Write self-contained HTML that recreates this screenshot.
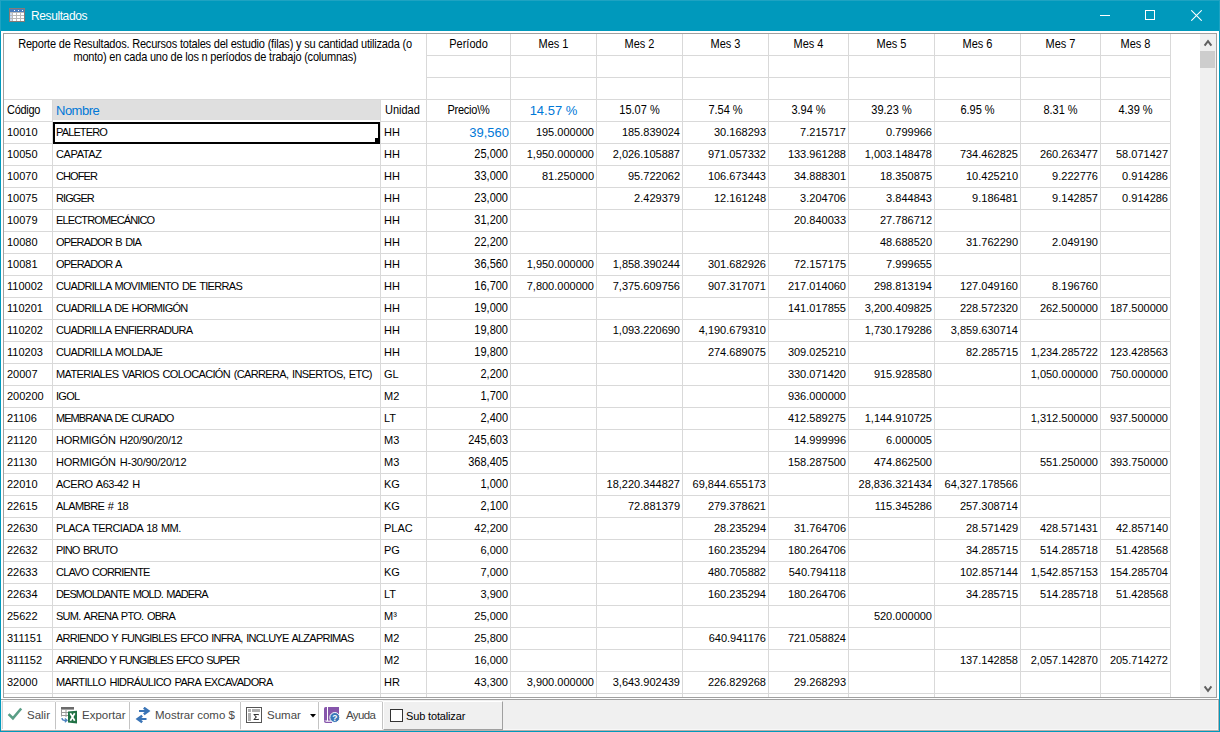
<!DOCTYPE html>
<html><head><meta charset="utf-8">
<style>
html,body{margin:0;padding:0;}
body{width:1220px;height:732px;overflow:hidden;position:relative;background:#0099bc;font-family:"Liberation Sans",sans-serif;}
div,span,svg{position:absolute;box-sizing:content-box;}
.t{font-size:11px;line-height:13px;color:#000;white-space:nowrap;}
.r{width:300px;text-align:right;}
.c{text-align:center;}
.blue{color:#0078d7;}
.b{font-size:13px;}
.nm{letter-spacing:-0.72px;word-spacing:1.2px;}
.ms{transform:scaleY(1.125);transform-origin:0 10.3px;}
.hdr{line-height:13px;}
.tb{font-size:11.5px;line-height:14px;color:#474747;white-space:nowrap;}
</style></head><body>
<!-- title bar -->
<div style="left:0;top:0;width:1220px;height:1px;background:#1ea3c2"></div><div style="left:0;top:0;width:1px;height:31px;background:#1ea3c2"></div><div style="left:1219px;top:0;width:1px;height:31px;background:#1ea3c2"></div>
<svg style="left:9px;top:8px" width="16" height="14" viewBox="0 0 16 14">
<rect x="0.5" y="0.5" width="15" height="13" fill="#b9b9b9" stroke="#857a76"/>
<rect x="1" y="1" width="14" height="3" fill="#4a7cbd"/>
<rect x="5" y="2" width="1" height="1" fill="#fff"/><rect x="9" y="2" width="1" height="1" fill="#fff"/><rect x="13" y="2" width="1" height="1" fill="#fff"/>
<rect x="1" y="5" width="2" height="2" fill="#c8daf0"/><rect x="4" y="5" width="3" height="2" fill="#fff"/><rect x="8" y="5" width="3" height="2" fill="#fff"/><rect x="12" y="5" width="3" height="2" fill="#fff"/>
<rect x="1" y="8" width="2" height="2" fill="#c8daf0"/><rect x="4" y="8" width="3" height="2" fill="#fff"/><rect x="8" y="8" width="3" height="2" fill="#fff"/><rect x="12" y="8" width="3" height="2" fill="#fff"/>
<rect x="1" y="11" width="2" height="2" fill="#c8daf0"/><rect x="4" y="11" width="3" height="2" fill="#fff"/><rect x="8" y="11" width="3" height="2" fill="#fff"/><rect x="12" y="11" width="3" height="2" fill="#fff"/>
</svg>
<span style="left:31px;top:9px;font-size:12px;line-height:14px;color:#fff;white-space:nowrap;letter-spacing:-0.4px">Resultados</span>
<div style="left:1100px;top:15px;width:10px;height:1px;background:#fff"></div>
<div style="left:1145px;top:10px;width:8px;height:8px;border:1px solid #fff"></div>
<svg style="left:1191px;top:10px" width="11" height="11" viewBox="0 0 11 11"><path d="M0.3 0.3 L10.7 10.7 M10.7 0.3 L0.3 10.7" stroke="#fff" stroke-width="1.05"/></svg>
<div style="left:1px;top:31px;width:1218px;height:700px;background:#ffffff;"></div>
<div style="left:3px;top:33px;width:1214px;height:665px;background:#a0a0a0;"></div>
<div style="left:4px;top:34px;width:1212px;height:663px;background:#ffffff;"></div>
<div style="left:426px;top:55px;width:745px;height:1px;background:#d9d9d9;"></div>
<div style="left:426px;top:77px;width:745px;height:1px;background:#d9d9d9;"></div>
<div style="left:4px;top:99px;width:1167px;height:1px;background:#d9d9d9;"></div>
<div style="left:4px;top:121px;width:1167px;height:1px;background:#d9d9d9;"></div>
<div style="left:4px;top:143px;width:1167px;height:1px;background:#d9d9d9;"></div>
<div style="left:4px;top:165px;width:1167px;height:1px;background:#d9d9d9;"></div>
<div style="left:4px;top:187px;width:1167px;height:1px;background:#d9d9d9;"></div>
<div style="left:4px;top:209px;width:1167px;height:1px;background:#d9d9d9;"></div>
<div style="left:4px;top:231px;width:1167px;height:1px;background:#d9d9d9;"></div>
<div style="left:4px;top:253px;width:1167px;height:1px;background:#d9d9d9;"></div>
<div style="left:4px;top:275px;width:1167px;height:1px;background:#d9d9d9;"></div>
<div style="left:4px;top:297px;width:1167px;height:1px;background:#d9d9d9;"></div>
<div style="left:4px;top:319px;width:1167px;height:1px;background:#d9d9d9;"></div>
<div style="left:4px;top:341px;width:1167px;height:1px;background:#d9d9d9;"></div>
<div style="left:4px;top:363px;width:1167px;height:1px;background:#d9d9d9;"></div>
<div style="left:4px;top:385px;width:1167px;height:1px;background:#d9d9d9;"></div>
<div style="left:4px;top:407px;width:1167px;height:1px;background:#d9d9d9;"></div>
<div style="left:4px;top:429px;width:1167px;height:1px;background:#d9d9d9;"></div>
<div style="left:4px;top:451px;width:1167px;height:1px;background:#d9d9d9;"></div>
<div style="left:4px;top:473px;width:1167px;height:1px;background:#d9d9d9;"></div>
<div style="left:4px;top:495px;width:1167px;height:1px;background:#d9d9d9;"></div>
<div style="left:4px;top:517px;width:1167px;height:1px;background:#d9d9d9;"></div>
<div style="left:4px;top:539px;width:1167px;height:1px;background:#d9d9d9;"></div>
<div style="left:4px;top:561px;width:1167px;height:1px;background:#d9d9d9;"></div>
<div style="left:4px;top:583px;width:1167px;height:1px;background:#d9d9d9;"></div>
<div style="left:4px;top:605px;width:1167px;height:1px;background:#d9d9d9;"></div>
<div style="left:4px;top:627px;width:1167px;height:1px;background:#d9d9d9;"></div>
<div style="left:4px;top:649px;width:1167px;height:1px;background:#d9d9d9;"></div>
<div style="left:4px;top:671px;width:1167px;height:1px;background:#d9d9d9;"></div>
<div style="left:4px;top:693px;width:1167px;height:1px;background:#d9d9d9;"></div>
<div style="left:52px;top:99px;width:1px;height:598px;background:#d9d9d9;"></div>
<div style="left:380px;top:99px;width:1px;height:598px;background:#d9d9d9;"></div>
<div style="left:426px;top:34px;width:1px;height:663px;background:#d9d9d9;"></div>
<div style="left:510px;top:34px;width:1px;height:663px;background:#d9d9d9;"></div>
<div style="left:596px;top:34px;width:1px;height:663px;background:#d9d9d9;"></div>
<div style="left:682px;top:34px;width:1px;height:663px;background:#d9d9d9;"></div>
<div style="left:768px;top:34px;width:1px;height:663px;background:#d9d9d9;"></div>
<div style="left:848px;top:34px;width:1px;height:663px;background:#d9d9d9;"></div>
<div style="left:934px;top:34px;width:1px;height:663px;background:#d9d9d9;"></div>
<div style="left:1020px;top:34px;width:1px;height:663px;background:#d9d9d9;"></div>
<div style="left:1100px;top:34px;width:1px;height:663px;background:#d9d9d9;"></div>
<div style="left:1170px;top:34px;width:1px;height:663px;background:#d9d9d9;"></div>
<div style="left:53px;top:100px;width:327px;height:20px;background:#dfdfdf;"></div>
<div style="left:53px;top:120px;width:327px;height:2px;background:#ffffff;"></div>
<div style="left:1200px;top:34px;width:16px;height:663px;background:#f0f0f0;"></div>
<div style="left:1200px;top:51px;width:15px;height:17px;background:#cdcdcd;"></div>
<svg style="position:absolute;left:1200px;top:34px" width="16" height="16"><path d="M4.6 11.6 L8 7.2 L11.4 11.6" fill="none" stroke="#606060" stroke-width="2"/></svg>
<svg style="position:absolute;left:1200px;top:680px" width="16" height="16"><path d="M4.6 6.4 L8 10.8 L11.4 6.4" fill="none" stroke="#606060" stroke-width="2"/></svg>
<div class="t c ms" style="left:4px;width:422px;top:38px;letter-spacing:-0.2px;">Reporte de Resultados. Recursos totales del estudio (filas) y su cantidad utilizada (o</div>
<div class="t c ms" style="left:4px;width:422px;top:51px;letter-spacing:-0.2px;">monto) en cada uno de los n per&iacute;odos de trabajo (columnas)</div>
<span class="t ms c" style="left:427px;width:83px;top:38px;">Per&iacute;odo</span>
<span class="t ms c" style="left:511px;width:85px;top:38px;">Mes 1</span>
<span class="t ms c" style="left:597px;width:85px;top:38px;">Mes 2</span>
<span class="t ms c" style="left:683px;width:85px;top:38px;">Mes 3</span>
<span class="t ms c" style="left:769px;width:79px;top:38px;">Mes 4</span>
<span class="t ms c" style="left:849px;width:85px;top:38px;">Mes 5</span>
<span class="t ms c" style="left:935px;width:85px;top:38px;">Mes 6</span>
<span class="t ms c" style="left:1021px;width:79px;top:38px;">Mes 7</span>
<span class="t ms c" style="left:1101px;width:69px;top:38px;">Mes 8</span>
<span class="t ms" style="left:7px;top:104px;letter-spacing:-0.3px">C&oacute;digo</span>
<span class="t blue b" style="left:56px;top:104px;letter-spacing:-0.5px">Nombre</span>
<span class="t ms" style="left:385px;top:104px;">Unidad</span>
<span class="t ms c" style="left:427px;width:83px;top:104px;letter-spacing:-0.25px">Precio\%</span>
<span class="t blue b c" style="left:511px;width:85px;top:104px;">14.57 %</span>
<span class="t ms c" style="left:597px;width:85px;top:104px;">15.07 %</span>
<span class="t ms c" style="left:683px;width:85px;top:104px;">7.54 %</span>
<span class="t ms c" style="left:769px;width:79px;top:104px;">3.94 %</span>
<span class="t ms c" style="left:849px;width:85px;top:104px;">39.23 %</span>
<span class="t ms c" style="left:935px;width:85px;top:104px;">6.95 %</span>
<span class="t ms c" style="left:1021px;width:79px;top:104px;">8.31 %</span>
<span class="t ms c" style="left:1101px;width:69px;top:104px;">4.39 %</span>
<span class="t" style="left:7px;top:126px;">10010</span>
<span class="t nm" style="left:56px;top:126px;letter-spacing:-0.863px">PALETERO</span>
<span class="t" style="left:384px;top:126px;">HH</span>
<span class="t blue b r" style="left:209px;top:126px;">39,560</span>
<span class="t r" style="left:294px;top:126px;">195.000000</span>
<span class="t r" style="left:380px;top:126px;">185.839024</span>
<span class="t r" style="left:466px;top:126px;">30.168293</span>
<span class="t r" style="left:546px;top:126px;">7.215717</span>
<span class="t r" style="left:632px;top:126px;">0.799966</span>
<span class="t" style="left:7px;top:148px;">10050</span>
<span class="t nm" style="left:56px;top:148px;letter-spacing:-0.387px">CAPATAZ</span>
<span class="t" style="left:384px;top:148px;">HH</span>
<span class="t ms r" style="left:208px;top:148px;">25,000</span>
<span class="t r" style="left:294px;top:148px;">1,950.000000</span>
<span class="t r" style="left:380px;top:148px;">2,026.105887</span>
<span class="t r" style="left:466px;top:148px;">971.057332</span>
<span class="t r" style="left:546px;top:148px;">133.961288</span>
<span class="t r" style="left:632px;top:148px;">1,003.148478</span>
<span class="t r" style="left:718px;top:148px;">734.462825</span>
<span class="t r" style="left:798px;top:148px;">260.263477</span>
<span class="t r" style="left:868px;top:148px;">58.071427</span>
<span class="t" style="left:7px;top:170px;">10070</span>
<span class="t nm" style="left:56px;top:170px;letter-spacing:-0.920px">CHOFER</span>
<span class="t" style="left:384px;top:170px;">HH</span>
<span class="t ms r" style="left:208px;top:170px;">33,000</span>
<span class="t r" style="left:294px;top:170px;">81.250000</span>
<span class="t r" style="left:380px;top:170px;">95.722062</span>
<span class="t r" style="left:466px;top:170px;">106.673443</span>
<span class="t r" style="left:546px;top:170px;">34.888301</span>
<span class="t r" style="left:632px;top:170px;">18.350875</span>
<span class="t r" style="left:718px;top:170px;">10.425210</span>
<span class="t r" style="left:798px;top:170px;">9.222776</span>
<span class="t r" style="left:868px;top:170px;">0.914286</span>
<span class="t" style="left:7px;top:192px;">10075</span>
<span class="t nm" style="left:56px;top:192px;letter-spacing:-0.920px">RIGGER</span>
<span class="t" style="left:384px;top:192px;">HH</span>
<span class="t ms r" style="left:208px;top:192px;">23,000</span>
<span class="t r" style="left:380px;top:192px;">2.429379</span>
<span class="t r" style="left:466px;top:192px;">12.161248</span>
<span class="t r" style="left:546px;top:192px;">3.204706</span>
<span class="t r" style="left:632px;top:192px;">3.844843</span>
<span class="t r" style="left:718px;top:192px;">9.186481</span>
<span class="t r" style="left:798px;top:192px;">9.142857</span>
<span class="t r" style="left:868px;top:192px;">0.914286</span>
<span class="t" style="left:7px;top:214px;">10079</span>
<span class="t nm" style="left:56px;top:214px;letter-spacing:-0.863px">ELECTROMEC&Aacute;NICO</span>
<span class="t" style="left:384px;top:214px;">HH</span>
<span class="t ms r" style="left:208px;top:214px;">31,200</span>
<span class="t r" style="left:546px;top:214px;">20.840033</span>
<span class="t r" style="left:632px;top:214px;">27.786712</span>
<span class="t" style="left:7px;top:236px;">10080</span>
<span class="t nm" style="left:56px;top:236px;letter-spacing:-0.874px">OPERADOR B DIA</span>
<span class="t" style="left:384px;top:236px;">HH</span>
<span class="t ms r" style="left:208px;top:236px;">22,200</span>
<span class="t r" style="left:632px;top:236px;">48.688520</span>
<span class="t r" style="left:718px;top:236px;">31.762290</span>
<span class="t r" style="left:798px;top:236px;">2.049190</span>
<span class="t" style="left:7px;top:258px;">10081</span>
<span class="t nm" style="left:56px;top:258px;letter-spacing:-0.831px">OPERADOR A</span>
<span class="t" style="left:384px;top:258px;">HH</span>
<span class="t ms r" style="left:208px;top:258px;">36,560</span>
<span class="t r" style="left:294px;top:258px;">1,950.000000</span>
<span class="t r" style="left:380px;top:258px;">1,858.390244</span>
<span class="t r" style="left:466px;top:258px;">301.682926</span>
<span class="t r" style="left:546px;top:258px;">72.157175</span>
<span class="t r" style="left:632px;top:258px;">7.999655</span>
<span class="t" style="left:7px;top:280px;">110002</span>
<span class="t nm" style="left:56px;top:280px;letter-spacing:-0.687px">CUADRILLA MOVIMIENTO DE TIERRAS</span>
<span class="t" style="left:384px;top:280px;">HH</span>
<span class="t ms r" style="left:208px;top:280px;">16,700</span>
<span class="t r" style="left:294px;top:280px;">7,800.000000</span>
<span class="t r" style="left:380px;top:280px;">7,375.609756</span>
<span class="t r" style="left:466px;top:280px;">907.317071</span>
<span class="t r" style="left:546px;top:280px;">217.014060</span>
<span class="t r" style="left:632px;top:280px;">298.813194</span>
<span class="t r" style="left:718px;top:280px;">127.049160</span>
<span class="t r" style="left:798px;top:280px;">8.196760</span>
<span class="t" style="left:7px;top:302px;">110201</span>
<span class="t nm" style="left:56px;top:302px;letter-spacing:-0.720px">CUADRILLA DE HORMIG&Oacute;N</span>
<span class="t" style="left:384px;top:302px;">HH</span>
<span class="t ms r" style="left:208px;top:302px;">19,000</span>
<span class="t r" style="left:546px;top:302px;">141.017855</span>
<span class="t r" style="left:632px;top:302px;">3,200.409825</span>
<span class="t r" style="left:718px;top:302px;">228.572320</span>
<span class="t r" style="left:798px;top:302px;">262.500000</span>
<span class="t r" style="left:868px;top:302px;">187.500000</span>
<span class="t" style="left:7px;top:324px;">110202</span>
<span class="t nm" style="left:56px;top:324px;letter-spacing:-0.720px">CUADRILLA ENFIERRADURA</span>
<span class="t" style="left:384px;top:324px;">HH</span>
<span class="t ms r" style="left:208px;top:324px;">19,800</span>
<span class="t r" style="left:380px;top:324px;">1,093.220690</span>
<span class="t r" style="left:466px;top:324px;">4,190.679310</span>
<span class="t r" style="left:632px;top:324px;">1,730.179286</span>
<span class="t r" style="left:718px;top:324px;">3,859.630714</span>
<span class="t" style="left:7px;top:346px;">110203</span>
<span class="t nm" style="left:56px;top:346px;letter-spacing:-0.657px">CUADRILLA MOLDAJE</span>
<span class="t" style="left:384px;top:346px;">HH</span>
<span class="t ms r" style="left:208px;top:346px;">19,800</span>
<span class="t r" style="left:466px;top:346px;">274.689075</span>
<span class="t r" style="left:546px;top:346px;">309.025210</span>
<span class="t r" style="left:718px;top:346px;">82.285715</span>
<span class="t r" style="left:798px;top:346px;">1,234.285722</span>
<span class="t r" style="left:868px;top:346px;">123.428563</span>
<span class="t" style="left:7px;top:368px;">20007</span>
<span class="t nm" style="left:56px;top:368px;letter-spacing:-0.643px">MATERIALES VARIOS COLOCACI&Oacute;N (CARRERA, INSERTOS, ETC)</span>
<span class="t" style="left:384px;top:368px;">GL</span>
<span class="t ms r" style="left:208px;top:368px;">2,200</span>
<span class="t r" style="left:546px;top:368px;">330.071420</span>
<span class="t r" style="left:632px;top:368px;">915.928580</span>
<span class="t r" style="left:798px;top:368px;">1,050.000000</span>
<span class="t r" style="left:868px;top:368px;">750.000000</span>
<span class="t" style="left:7px;top:390px;">200200</span>
<span class="t nm" style="left:56px;top:390px;letter-spacing:-0.720px">IGOL</span>
<span class="t" style="left:384px;top:390px;">M2</span>
<span class="t ms r" style="left:208px;top:390px;">1,700</span>
<span class="t r" style="left:546px;top:390px;">936.000000</span>
<span class="t" style="left:7px;top:412px;">21106</span>
<span class="t nm" style="left:56px;top:412px;letter-spacing:-0.955px">MEMBRANA DE CURADO</span>
<span class="t" style="left:384px;top:412px;">LT</span>
<span class="t ms r" style="left:208px;top:412px;">2,400</span>
<span class="t r" style="left:546px;top:412px;">412.589275</span>
<span class="t r" style="left:632px;top:412px;">1,144.910725</span>
<span class="t r" style="left:798px;top:412px;">1,312.500000</span>
<span class="t r" style="left:868px;top:412px;">937.500000</span>
<span class="t" style="left:7px;top:434px;">21120</span>
<span class="t nm" style="left:56px;top:434px;letter-spacing:-0.270px">HORMIG&Oacute;N H20/90/20/12</span>
<span class="t" style="left:384px;top:434px;">M3</span>
<span class="t ms r" style="left:208px;top:434px;">245,603</span>
<span class="t r" style="left:546px;top:434px;">14.999996</span>
<span class="t r" style="left:632px;top:434px;">6.000005</span>
<span class="t" style="left:7px;top:456px;">21130</span>
<span class="t nm" style="left:56px;top:456px;letter-spacing:-0.244px">HORMIG&Oacute;N H-30/90/20/12</span>
<span class="t" style="left:384px;top:456px;">M3</span>
<span class="t ms r" style="left:208px;top:456px;">368,405</span>
<span class="t r" style="left:546px;top:456px;">158.287500</span>
<span class="t r" style="left:632px;top:456px;">474.862500</span>
<span class="t r" style="left:798px;top:456px;">551.250000</span>
<span class="t r" style="left:868px;top:456px;">393.750000</span>
<span class="t" style="left:7px;top:478px;">22010</span>
<span class="t nm" style="left:56px;top:478px;letter-spacing:-0.489px">ACERO A63-42 H</span>
<span class="t" style="left:384px;top:478px;">KG</span>
<span class="t ms r" style="left:208px;top:478px;">1,000</span>
<span class="t r" style="left:380px;top:478px;">18,220.344827</span>
<span class="t r" style="left:466px;top:478px;">69,844.655173</span>
<span class="t r" style="left:632px;top:478px;">28,836.321434</span>
<span class="t r" style="left:718px;top:478px;">64,327.178566</span>
<span class="t" style="left:7px;top:500px;">22615</span>
<span class="t nm" style="left:56px;top:500px;letter-spacing:-0.629px">ALAMBRE # 18</span>
<span class="t" style="left:384px;top:500px;">KG</span>
<span class="t ms r" style="left:208px;top:500px;">2,100</span>
<span class="t r" style="left:380px;top:500px;">72.881379</span>
<span class="t r" style="left:466px;top:500px;">279.378621</span>
<span class="t r" style="left:632px;top:500px;">115.345286</span>
<span class="t r" style="left:718px;top:500px;">257.308714</span>
<span class="t" style="left:7px;top:522px;">22630</span>
<span class="t nm" style="left:56px;top:522px;letter-spacing:-0.570px">PLACA TERCIADA 18 MM.</span>
<span class="t" style="left:384px;top:522px;">PLAC</span>
<span class="t r" style="left:208px;top:522px;">42,200</span>
<span class="t r" style="left:466px;top:522px;">28.235294</span>
<span class="t r" style="left:546px;top:522px;">31.764706</span>
<span class="t r" style="left:718px;top:522px;">28.571429</span>
<span class="t r" style="left:798px;top:522px;">428.571431</span>
<span class="t r" style="left:868px;top:522px;">42.857140</span>
<span class="t" style="left:7px;top:544px;">22632</span>
<span class="t nm" style="left:56px;top:544px;letter-spacing:-0.831px">PINO BRUTO</span>
<span class="t" style="left:384px;top:544px;">PG</span>
<span class="t r" style="left:208px;top:544px;">6,000</span>
<span class="t r" style="left:466px;top:544px;">160.235294</span>
<span class="t r" style="left:546px;top:544px;">180.264706</span>
<span class="t r" style="left:718px;top:544px;">34.285715</span>
<span class="t r" style="left:798px;top:544px;">514.285718</span>
<span class="t r" style="left:868px;top:544px;">51.428568</span>
<span class="t" style="left:7px;top:566px;">22633</span>
<span class="t nm" style="left:56px;top:566px;letter-spacing:-0.791px">CLAVO CORRIENTE</span>
<span class="t" style="left:384px;top:566px;">KG</span>
<span class="t r" style="left:208px;top:566px;">7,000</span>
<span class="t r" style="left:466px;top:566px;">480.705882</span>
<span class="t r" style="left:546px;top:566px;">540.794118</span>
<span class="t r" style="left:718px;top:566px;">102.857144</span>
<span class="t r" style="left:798px;top:566px;">1,542.857153</span>
<span class="t r" style="left:868px;top:566px;">154.285704</span>
<span class="t" style="left:7px;top:588px;">22634</span>
<span class="t nm" style="left:56px;top:588px;letter-spacing:-0.937px">DESMOLDANTE MOLD. MADERA</span>
<span class="t" style="left:384px;top:588px;">LT</span>
<span class="t r" style="left:208px;top:588px;">3,900</span>
<span class="t r" style="left:466px;top:588px;">160.235294</span>
<span class="t r" style="left:546px;top:588px;">180.264706</span>
<span class="t r" style="left:718px;top:588px;">34.285715</span>
<span class="t r" style="left:798px;top:588px;">514.285718</span>
<span class="t r" style="left:868px;top:588px;">51.428568</span>
<span class="t" style="left:7px;top:610px;">25622</span>
<span class="t nm" style="left:56px;top:610px;letter-spacing:-0.720px">SUM. ARENA PTO. OBRA</span>
<span class="t" style="left:384px;top:610px;">M&sup3;</span>
<span class="t r" style="left:208px;top:610px;">25,000</span>
<span class="t r" style="left:632px;top:610px;">520.000000</span>
<span class="t" style="left:7px;top:632px;">311151</span>
<span class="t nm" style="left:56px;top:632px;letter-spacing:-0.760px">ARRIENDO Y FUNGIBLES EFCO INFRA, INCLUYE ALZAPRIMAS</span>
<span class="t" style="left:384px;top:632px;">M2</span>
<span class="t r" style="left:208px;top:632px;">25,800</span>
<span class="t r" style="left:466px;top:632px;">640.941176</span>
<span class="t r" style="left:546px;top:632px;">721.058824</span>
<span class="t" style="left:7px;top:654px;">311152</span>
<span class="t nm" style="left:56px;top:654px;letter-spacing:-0.953px">ARRIENDO Y FUNGIBLES EFCO SUPER</span>
<span class="t" style="left:384px;top:654px;">M2</span>
<span class="t r" style="left:208px;top:654px;">16,000</span>
<span class="t r" style="left:718px;top:654px;">137.142858</span>
<span class="t r" style="left:798px;top:654px;">2,057.142870</span>
<span class="t r" style="left:868px;top:654px;">205.714272</span>
<span class="t" style="left:7px;top:676px;">32000</span>
<span class="t nm" style="left:56px;top:676px;letter-spacing:-0.632px">MARTILLO HIDR&Aacute;ULICO PARA EXCAVADORA</span>
<span class="t" style="left:384px;top:676px;">HR</span>
<span class="t r" style="left:208px;top:676px;">43,300</span>
<span class="t r" style="left:294px;top:676px;">3,900.000000</span>
<span class="t r" style="left:380px;top:676px;">3,643.902439</span>
<span class="t r" style="left:466px;top:676px;">226.829268</span>
<span class="t r" style="left:546px;top:676px;">29.268293</span>
<div style="left:53px;top:122px;width:323px;height:18px;border:2px solid #000;"></div>
<div style="left:375px;top:138px;width:5px;height:6px;background:#000;"></div>
<!-- toolbar -->
<div style="left:1px;top:698px;width:1218px;height:1px;background:#fff"></div>
<div style="left:1px;top:699px;width:1218px;height:1px;background:#a0a0a0"></div>
<div style="left:1px;top:700px;width:1217px;height:30px;background:#f0f0f0"></div>
<div style="left:383px;top:729px;width:835px;height:1px;background:#f8f8f8"></div><div style="left:1217px;top:700px;width:1px;height:30px;background:#f8f8f8"></div><div style="left:1px;top:730px;width:1218px;height:1px;background:#b8aeac"></div>
<div style="left:1218px;top:700px;width:1px;height:31px;background:#b8aeac"></div>
<div style="left:2px;top:701px;width:53px;height:28px;background:#fff;border-top:1px solid #e2e2e2;"></div>
<div style="left:55px;top:702px;width:1px;height:27px;background:#c4c4c4"></div>
<div style="left:56px;top:702px;width:1px;height:27px;background:#e8e8e8"></div>
<div style="left:56px;top:701px;width:73px;height:28px;background:#fff;border-top:1px solid #e2e2e2;"></div>
<div style="left:129px;top:702px;width:1px;height:27px;background:#c4c4c4"></div>
<div style="left:130px;top:702px;width:1px;height:27px;background:#e8e8e8"></div>
<div style="left:130px;top:701px;width:110px;height:28px;background:#fff;border-top:1px solid #e2e2e2;"></div>
<div style="left:240px;top:702px;width:1px;height:27px;background:#c4c4c4"></div>
<div style="left:241px;top:702px;width:1px;height:27px;background:#e8e8e8"></div>
<div style="left:241px;top:701px;width:77px;height:28px;background:#fff;border-top:1px solid #e2e2e2;"></div>
<div style="left:318px;top:702px;width:1px;height:27px;background:#c4c4c4"></div>
<div style="left:319px;top:702px;width:1px;height:27px;background:#e8e8e8"></div>
<div style="left:319px;top:701px;width:63px;height:28px;background:#fff;border-top:1px solid #e2e2e2;"></div>
<div style="left:382px;top:702px;width:1px;height:27px;background:#c4c4c4"></div>
<div style="left:383px;top:702px;width:1px;height:27px;background:#e8e8e8"></div>
<div style="left:2px;top:701px;width:1px;height:28px;background:#d4d4d4"></div>
<div style="left:1px;top:700px;width:382px;height:1px;background:#fbfbfb"></div>
<div style="left:383px;top:701px;width:118px;height:27px;background:#f0f0f0;border-left:1px solid #fff;border-top:1px solid #fff;border-right:1px solid #a0a0a0;border-bottom:1px solid #a0a0a0"></div>
<svg style="left:7px;top:707px" width="16" height="14" viewBox="0 0 16 14"><path d="M1.6 7.1 L5.9 11.3 L14.2 1.5" fill="none" stroke="#5a9e86" stroke-width="2.6"/></svg>
<span class="tb" style="left:27px;top:708px">Salir</span>
<svg style="left:61px;top:707px" width="17" height="17" viewBox="0 0 17 17"><rect x="0" y="0" width="13" height="2.6" fill="#6b6b6b"/><path d="M0.5 2 V9.5 M5 3 V10 M0 5.5 H7 M0 8.5 H7" stroke="#9a9a9a" stroke-width="1"/><path d="M1 11 Q1 13.3 3.5 13.3 H5" fill="none" stroke="#4a82c0" stroke-width="1.3"/><path d="M3.8 11.5 L6 13.3 L3.8 15.2" fill="none" stroke="#4a82c0" stroke-width="1.3"/><path d="M7 4.5 L16 3.8 L16 16.5 L7 15.5 Z" fill="#1f7144"/><path d="M9.3 6.3 L13.7 13.7 M13.7 6.3 L9.3 13.7" stroke="#fff" stroke-width="1.7"/></svg>
<span class="tb" style="left:82px;top:708px">Exportar</span>
<svg style="left:135px;top:707px" width="16" height="17" viewBox="0 0 16 17"><path d="M4 4 H13" stroke="#3a74b6" stroke-width="2"/><path d="M8.8 0.8 L13.2 4 L8.8 7.2" fill="none" stroke="#3a74b6" stroke-width="2.6" stroke-linejoin="miter" stroke-miterlimit="10"/><path d="M11.5 12 H3" stroke="#3a74b6" stroke-width="2"/><path d="M7.2 8.8 L2.8 12 L7.2 15.2" fill="none" stroke="#3a74b6" stroke-width="2.6" stroke-linejoin="miter" stroke-miterlimit="10"/></svg>
<span class="tb" style="left:155px;top:708px">Mostrar como $</span>
<svg style="left:246px;top:707px" width="16" height="16" viewBox="0 0 16 16"><rect x="0.5" y="0.5" width="15" height="15" fill="#fff" stroke="#555"/><rect x="2" y="2" width="3" height="3" fill="#b0b0b0"/><rect x="6" y="2" width="8" height="3" fill="#b0b0b0"/><rect x="2" y="6" width="3" height="8" fill="#b0b0b0"/><path d="M7.2 7 H12.8 V8.6 L12.2 8 H9 L11 10 L9 12 H12.2 L12.8 11.4 V13 H7.2 L9.5 10 Z" fill="#333"/></svg>
<span class="tb" style="left:267px;top:708px">Sumar</span>
<svg style="left:310px;top:714px" width="6" height="4" viewBox="0 0 6 4"><path d="M0 0 H6 L3 3.5 Z" fill="#000"/></svg>
<svg style="left:324px;top:707px" width="17" height="17" viewBox="0 0 17 17"><path d="M0 1.6 Q0 0 1.6 0 H3 V13.6 H0 Z" fill="#8655ab"/><rect x="4" y="0" width="11" height="13.6" fill="#8655ab"/><path d="M0.6 13.5 Q0.6 15.4 2.4 15.4 H8" fill="none" stroke="#8655ab" stroke-width="1.3"/><circle cx="10.8" cy="10.5" r="5" fill="#3b78b8" stroke="#fff" stroke-width="1"/><text x="10.9" y="13.6" font-size="8.5" font-family="Liberation Sans" font-weight="bold" fill="#fff" text-anchor="middle">?</text></svg>
<span class="tb" style="left:346px;top:708px;letter-spacing:-0.6px">Ayuda</span>
<div style="left:390px;top:709px;width:11px;height:11px;border:1px solid #333;background:#fff"></div>
<span class="t" style="left:406px;top:710px;color:#000;letter-spacing:-0.15px">Sub totalizar</span>
</body></html>
